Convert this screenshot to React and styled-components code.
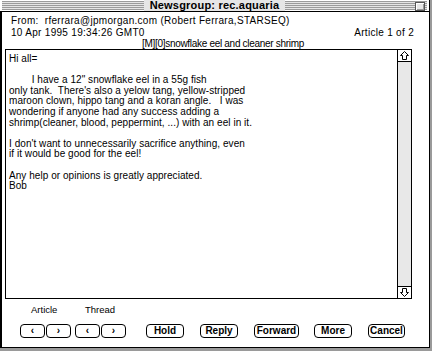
import React from 'react'
import styled, { createGlobalStyle } from 'styled-components'

const GlobalStyle = createGlobalStyle`
  html, body {
    margin: 0;
    padding: 0;
    background: #9a9a9a;
  }
  body {
    font-family: "Liberation Sans", Arial, sans-serif;
  }
`

const Window = styled.div`
  width: 430px;
  height: 348px;
  background: #fff;
  border-right: 1px solid #000;
  border-bottom: 1px solid #000;
  display: flex;
  flex-direction: column;
  box-sizing: border-box;
`

const TitleBar = styled.div`
  height: 12px;
  flex: none;
  position: relative;
  display: flex;
  align-items: center;
  justify-content: center;
  background: repeating-linear-gradient(
    to bottom,
    #e4e4e4 0px,
    #e4e4e4 1px,
    #9a9a9a 1px,
    #9a9a9a 2px
  );
  background-clip: content-box;
  padding: 1px 2px;
  box-sizing: border-box;
  background-color: #e6e6e6;
  border-bottom: 1px solid #000;
`

const Title = styled.div`
  background: #e6e6e6;
  padding: 0 6px;
  font-size: 11px;
  font-weight: bold;
  line-height: 11px;
  color: #000;
  letter-spacing: 0.2px;
`

const CloseBox = styled.div`
  position: absolute;
  right: 4px;
  top: 2px;
  width: 8px;
  height: 7px;
  background: #e6e6e6;
  border: 1px solid #555;
  box-shadow: inset 1px 1px 0 #fff, inset -1px -1px 0 #999;
`

const Content = styled.div`
  flex: 1;
  display: flex;
  flex-direction: column;
  border-left: 2px solid #000;
  padding: 0 0 0 3px;
  font-size: 10px;
  color: #000;
`

const HeaderLine = styled.div`
  display: flex;
  justify-content: ${({ $center }) => ($center ? 'center' : 'space-between')};
  padding: ${({ $center }) => ($center ? '0 0 0 12px' : '0 15px 0 6px')};
  letter-spacing: ${({ $center }) => ($center ? '-0.3px' : '0.3px')};
  line-height: 11px;
  height: 11px;
  white-space: pre;
`

const Spacer = styled.div`
  height: ${({ $h }) => $h}px;
  flex: none;
`

const Panel = styled.div`
  width: 407px;
  height: 250px;
  border: 1px solid #000;
  display: flex;
  flex: none;
  box-sizing: border-box;
`

const Body = styled.div`
  flex: 1;
  padding: 4px 3px;
  white-space: pre;
  line-height: 10.6px;
  font-size: 10px;
  letter-spacing: 0.05px;
`

const ScrollBar = styled.div`
  width: 13px;
  border-left: 1px solid #000;
  display: flex;
  flex-direction: column;
  background: #e8e8e8;
`

const Arrow = styled.div`
  height: 11px;
  flex: none;
  background: #fff;
  display: flex;
  align-items: center;
  justify-content: center;
  border-${({ $down }) => ($down ? 'top' : 'bottom')}: 1px solid #000;
`

const Track = styled.div`
  flex: 1;
`

const LabelRow = styled.div`
  display: flex;
  height: 12px;
  padding: 5px 0 0 26px;
  font-size: 9.5px;
  line-height: 12px;
`

const Label = styled.span`
  width: ${({ $w }) => $w}px;
`

const ButtonRow = styled.div`
  display: flex;
  align-items: center;
  padding: 8px 0 0 15px;
`

const Group = styled.div`
  display: flex;
  gap: 1px;
  margin-right: ${({ $mr }) => $mr}px;
`

const Button = styled.div`
  width: ${({ $w }) => $w}px;
  height: 14px;
  box-sizing: border-box;
  border: 1px solid #000;
  border-radius: 4px;
  display: flex;
  align-items: center;
  justify-content: center;
  font-size: 10px;
  font-weight: bold;
  line-height: 12px;
  margin-right: ${({ $mr }) => $mr || 0}px;
  background: #fff;
`

const UpArrow = ({ down }) => (
  <svg width="9" height="9" viewBox="0 0 9 9" style={down ? { transform: 'rotate(180deg)' } : undefined}>
    <path d="M4.5 0.5 L8.5 4.5 L6.5 4.5 L6.5 8.5 L2.5 8.5 L2.5 4.5 L0.5 4.5 Z" fill="none" stroke="#000" strokeWidth="1" />
  </svg>
)

const bodyText = `Hi all=

        I have a 12" snowflake eel in a 55g fish
only tank.  There's also a yelow tang, yellow-stripped
maroon clown, hippo tang and a koran angle.   I was
wondering if anyone had any success adding a
shrimp(cleaner, blood, peppermint, ...) with an eel in it.

I don't want to unnecessarily sacrifice anything, even
if it would be good for the eel!

Any help or opinions is greatly appreciated.
Bob`

export default function App() {
  return (
    <>
      <GlobalStyle />
      <Window>
        <TitleBar>
          <Title>Newsgroup: rec.aquaria</Title>
          <CloseBox />
        </TitleBar>
        <Content>
          <Spacer $h={3} />
          <HeaderLine>
            <span>From:  rferrara@jpmorgan.com (Robert Ferrara,STARSEQ)</span>
          </HeaderLine>
          <Spacer $h={1} />
          <HeaderLine>
            <span>10 Apr 1995 19:34:26 GMT0</span>
            <span>Article 1 of 2</span>
          </HeaderLine>
          <HeaderLine $center>
            <span>[M][0]snowflake eel and cleaner shrimp</span>
          </HeaderLine>
          <Panel>
            <Body>{bodyText}</Body>
            <ScrollBar>
              <Arrow><UpArrow /></Arrow>
              <Track />
              <Arrow $down><UpArrow down /></Arrow>
            </ScrollBar>
          </Panel>
          <LabelRow>
            <Label $w={54}>Article</Label>
            <Label $w={60}>Thread</Label>
          </LabelRow>
          <ButtonRow>
            <Group $mr={4}>
              <Button $w={25}>&lsaquo;</Button>
              <Button $w={25}>&rsaquo;</Button>
            </Group>
            <Group $mr={20}>
              <Button $w={25}>&lsaquo;</Button>
              <Button $w={25}>&rsaquo;</Button>
            </Group>
            <Button $w={38} $mr={16}>Hold</Button>
            <Button $w={38} $mr={16}>Reply</Button>
            <Button $w={45} $mr={15}>Forward</Button>
            <Button $w={38} $mr={16}>More</Button>
            <Button $w={37}>Cancel</Button>
          </ButtonRow>
        </Content>
      </Window>
    </>
  )
}
